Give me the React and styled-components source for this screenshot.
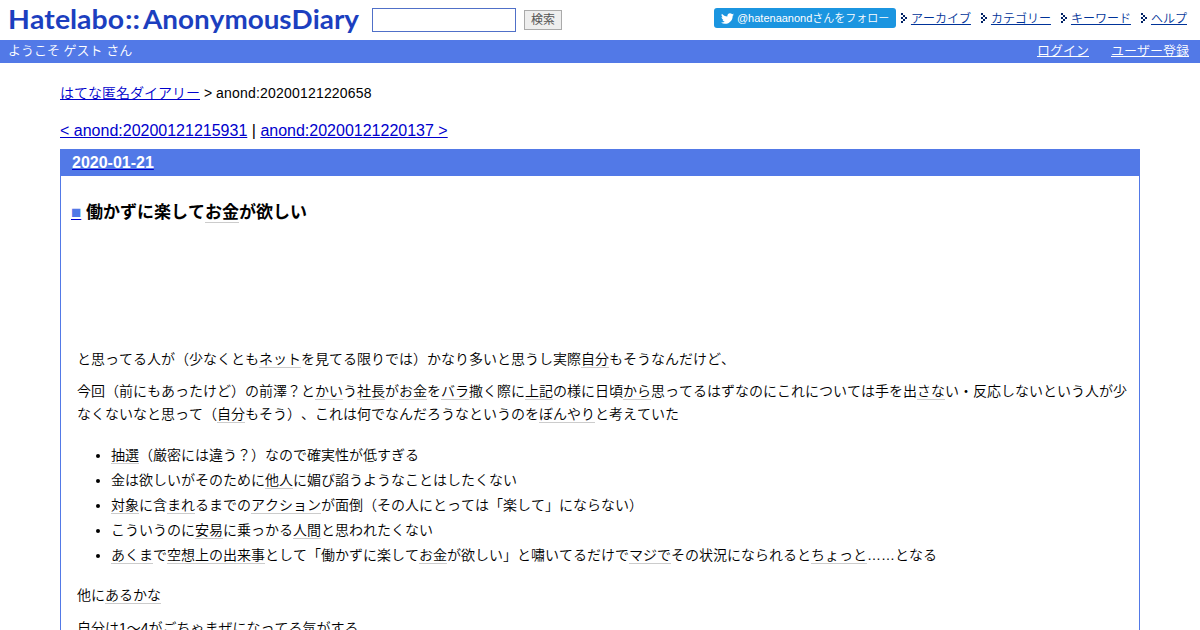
import styled, { createGlobalStyle } from "styled-components";
import { FaTwitter } from "react-icons/fa";

const GlobalStyle = createGlobalStyle`
  body {
    margin: 0;
    background: #fff;
    color: #000;
    font-family: "Liberation Sans", "Noto Sans CJK JP", sans-serif;
    font-weight: 350;
    font-kerning: none;
    text-spacing-trim: space-all;
  }
  a {
    color: #0000cc;
  }
`;

const Page = styled.div`
  display: flex;
  flex-direction: column;
  height: 630px;
  overflow: hidden;
`;
const Header = styled.header`
  display: flex;
  flex-shrink: 0;
  align-items: flex-start;
  height: 40px;
`;
const Logo = styled.svg`
  display: block;
  width: 364px;
  height: 40px;
  margin-right: 8px;
  font-family: Lato, sans-serif;
  font-weight: 700;
  font-size: 26px;
  fill: #1c3fbf;
`;
const SearchForm = styled.form`
  display: flex;
  flex: 1;
  margin: 8px 0 0;
`;
const SearchInput = styled.input`
  box-sizing: border-box;
  width: 144px;
  height: 24px;
  margin: 0 8px 0 0;
  border: 1px solid #5070c8;
  background: #fff;
`;
const SearchButton = styled.button`
  box-sizing: border-box;
  width: 38px;
  height: 20px;
  margin: 2px 0 0;
  padding: 0;
  border: 1px solid #aaa;
  background: #eee;
  color: #555;
  font-family: inherit;
  font-size: 12px;
  line-height: 17px;
`;
const FollowButton = styled.a`
  display: flex;
  align-items: center;
  gap: 3px;
  box-sizing: border-box;
  width: 182px;
  height: 20px;
  margin: 8px 5px 0 0;
  padding-left: 7px;
  border-radius: 3px;
  background: #1b95e0;
  color: #fff;
  font-size: 11px;
  line-height: 20px;
  text-decoration: none;
  white-space: nowrap;
`;
const Nav = styled.nav`
  display: flex;
  gap: 10px;
  padding: 8px 13px 0 0;
`;
const NavItem = styled.span`
  display: flex;
  align-items: center;
  gap: 3px;
  height: 20px;
  font-size: 12px;
  line-height: 20px;
  a {
    padding-top: 1px;
    color: #003399;
  }
`;
const GuestBar = styled.div`
  display: flex;
  flex-shrink: 0;
  justify-content: space-between;
  height: 23px;
  padding: 0 11px 0 8px;
  background: #5279e7;
  color: #fff;
  font-size: 13px;
  line-height: 22px;
`;
const GuestLinks = styled.div`
  display: flex;
  gap: 22px;
  a {
    color: #fff;
  }
`;

const Main = styled.main`
  display: flex;
  flex: 1;
  flex-direction: column;
  min-height: 0;
  padding: 0 60px;
`;
const Breadcrumb = styled.div`
  padding-top: 20px;
  font-size: 14px;
  line-height: 20px;
`;
const EntryId = styled.span`
  letter-spacing: 0.2px;
`;
const Pager = styled.div`
  padding: 18px 0 8px;
  font-size: 16px;
  line-height: 20px;
`;
const Day = styled.div`
  flex: 1;
  min-height: 0;
  border: 1px solid #5279e7;
  border-bottom: 0;
  overflow: hidden;
`;
const DayTitle = styled.h2`
  height: 26px;
  margin: 0;
  padding-left: 11px;
  background: #5279e7;
  font-size: 16px;
  line-height: 26px;
  span {
    color: #fff;
  }
`;
const Section = styled.div`
  padding: 25px 10px 0;
`;
const Title = styled.h3`
  margin: 0 0 124px;
  font-size: 17px;
  line-height: 23px;
`;
const Anchor = styled.span`
  color: #5279e7;
`;
const Keyword = styled.span`
  border-bottom: 1px solid #ccc;
`;
const Paragraph = styled.p`
  margin: 0 0 9px 6px;
  font-size: 14px;
  line-height: 23px;
`;
const List = styled.ul`
  margin: 17px 0 16px;
  padding-left: 40px;
  font-size: 14px;
  line-height: 25px;
`;
const Closing = styled(Paragraph)`
  margin-top: 10px;
`;

const links = ["アーカイブ", "カテゴリー", "キーワード", "ヘルプ"];

const paragraphs = [
  "と思ってる人が（少なくとも[ネット]を見てる限りでは）かなり多いと思うし実際[自分]もそうなんだけど、",
  "今回（前にもあったけど）の前澤？と[かい]う[社長]が[お金]を[バラ]撒く際に[上記]の様に日頃[から]思ってるはずなのにこれについては手を出[さな]い・反応しないという人が少なくないなと思って（[自分]もそう）、これは何でなんだろうなというのを[ぼんやり]と考えていた",
];

const reasons = [
  "[抽選]（厳密には違う？）なので確実性が低すぎる",
  "金は欲しいがそのために[他人]に媚び諂うようなことはしたくない",
  "[対象]に含[まれ]るまでの[アクション]が面倒（その人にとっては「楽して」にならない）",
  "こういうのに[安易]に乗っかる[人間]と思われたくない",
  "[あくま]で[空想上の出来事]として「働かずに楽して[お金]が欲しい」と嘯いてるだけで[マジで]その状況になられると[ちょっと]……となる",
];

// words in [brackets] are keyword links
const Body = ({ text }) =>
  text
    .split(/[[\]]/)
    .map((part, i) => (i % 2 ? <Keyword key={i}>{part}</Keyword> : part));

const Arrow = () => (
  <svg width="7" height="10" shapeRendering="crispEdges" fill="#002266">
    <path d="M0 0h2v2h-2zM2 2h2v2h-2zM4 4h2v2h-2zM2 6h2v2h-2zM0 8h2v2h-2zM0 4h2v2h-2z" />
  </svg>
);

const App = () => {
  return (
    <Page>
      <GlobalStyle />
      <Header>
        <Logo>
          <text x="8" y="29" textLength="116" lengthAdjust="spacingAndGlyphs">
            Hatelabo
          </text>
          <text x="125" y="29" textLength="15" lengthAdjust="spacingAndGlyphs">
            ::
          </text>
          <text x="143" y="29" textLength="216" lengthAdjust="spacingAndGlyphs">
            AnonymousDiary
          </text>
        </Logo>
        <SearchForm>
          <SearchInput />
          <SearchButton type="button">検索</SearchButton>
        </SearchForm>
        <FollowButton href="#">
          <FaTwitter size={13} />
          @hatenaanondさんをフォロー
        </FollowButton>
        <Nav>
          {links.map((link) => (
            <NavItem key={link}>
              <Arrow />
              <a href="#">{link}</a>
            </NavItem>
          ))}
        </Nav>
      </Header>
      <GuestBar>
        <span>ようこそ ゲスト さん</span>
        <GuestLinks>
          <a href="#">ログイン</a>
          <a href="#">ユーザー登録</a>
        </GuestLinks>
      </GuestBar>
      <Main>
        <Breadcrumb>
          <a href="#">はてな匿名ダイアリー</a> &gt;{" "}
          <EntryId>anond:20200121220658</EntryId>
        </Breadcrumb>
        <Pager>
          <a href="#">&lt; anond:20200121215931</a> |{" "}
          <a href="#">anond:20200121220137 &gt;</a>
        </Pager>
        <Day>
          <DayTitle>
            <a href="#">
              <span>2020-01-21</span>
            </a>
          </DayTitle>
          <Section>
            <Title>
              <a href="#">
                <Anchor>■</Anchor>
              </a>{" "}
              <Body text="働かずに楽して[お金]が欲しい" />
            </Title>
            {paragraphs.map((text) => (
              <Paragraph key={text}>
                <Body text={text} />
              </Paragraph>
            ))}
            <List>
              {reasons.map((text) => (
                <li key={text}>
                  <Body text={text} />
                </li>
              ))}
            </List>
            <Paragraph>
              <Body text="他に[あるかな]" />
            </Paragraph>
            <Closing>自分は1～4がごちゃまぜになってる気がする</Closing>
          </Section>
        </Day>
      </Main>
    </Page>
  );
};

export default App;
